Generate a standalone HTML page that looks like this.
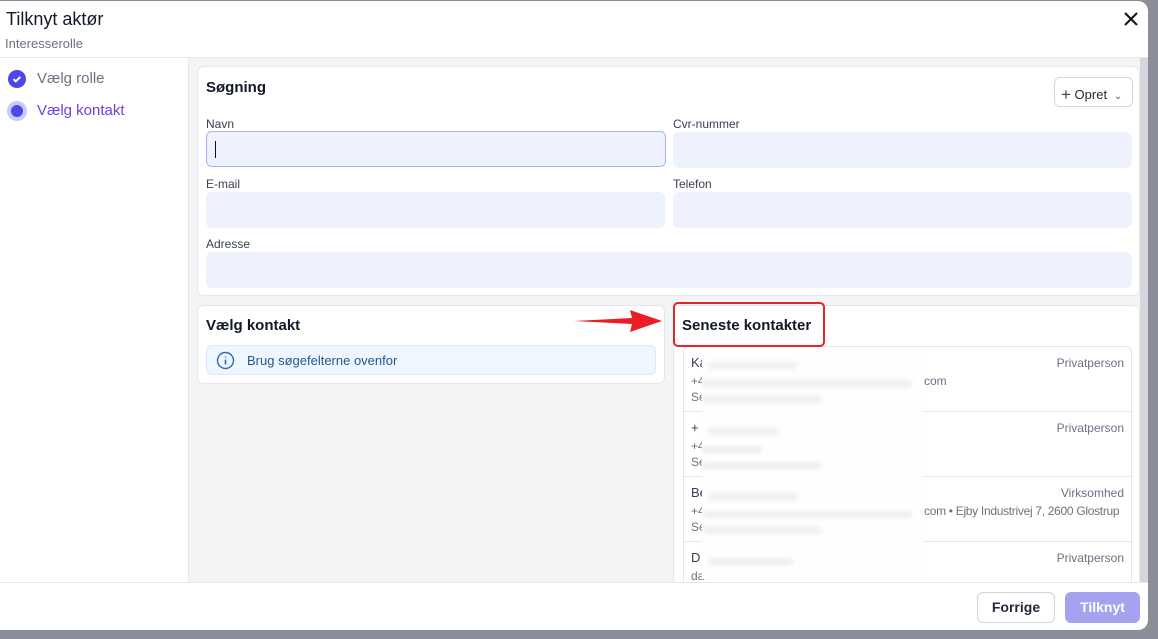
<!DOCTYPE html>
<html><head><meta charset="utf-8"><style>
*{box-sizing:border-box;margin:0;padding:0}
body{width:1158px;height:639px;background:#8b8e99;font-family:"Liberation Sans",sans-serif;position:relative;overflow:hidden}
.dlg{position:absolute;left:0;top:1px;width:1148px;height:629px;background:#fff;border-radius:0 10px 10px 0;overflow:hidden}
.abs{position:absolute}
.hdr{left:0;top:0;width:1148px;height:57px;border-bottom:1px solid #e5e7eb}
.side{left:0;top:57px;width:189px;height:524px;border-right:1px solid #e5e7eb}
.main{left:189px;top:57px;width:951px;height:524px;background:#f3f4f6;overflow:hidden}
.sb{left:1140px;top:57px;width:8px;height:524px;background:#d4d6dc}
.card{position:absolute;background:#fff;border:1px solid #e5e7eb;border-radius:7px}
.lbl{position:absolute;font-size:12px;color:#374151}
.inp{position:absolute;height:36px;background:#eef2fd;border-radius:6px}
.h{font-size:15px;font-weight:bold;color:#111827;position:absolute}
.row{position:absolute;left:0;width:448px;height:65px;border-bottom:1px solid #e5e7eb;font-size:12px;color:#6b7280;white-space:nowrap}
.foot{left:0;top:581px;width:1148px;height:48px;border-top:1px solid #e5e7eb}
.bl{position:absolute;height:7px;background:#eceef0;border-radius:4px;filter:blur(2px)}
</style></head><body>
<div class="dlg">
<div class="abs hdr">
 <div class="abs" style="left:6px;top:8px;font-size:18px;color:#111827">Tilknyt aktør</div>
 <div class="abs" style="left:5px;top:35px;font-size:13px;color:#6b7280">Interesserolle</div>
 <svg class="abs" style="left:1124px;top:11px" width="14" height="14" viewBox="0 0 14 14"><path d="M1 1L13 13M13 1L1 13" stroke="#111" stroke-width="2"/></svg>
</div>
<div class="abs side">
 <div class="abs" style="left:8px;top:12px;width:18px;height:18px;border-radius:50%;background:#4f46e5"><svg width="18" height="18" viewBox="0 0 18 18"><path d="M5.5 9.2l2.3 2.2 4.5-4.6" stroke="#fff" stroke-width="2" fill="none"/></svg></div>
 <div class="abs" style="left:37px;top:12px;font-size:15px;color:#6b7280">Vælg rolle</div>
 <div class="abs" style="left:7px;top:43px;width:20px;height:20px;border-radius:50%;background:#c7cbf7"><div style="margin:4px;width:12px;height:12px;border-radius:50%;background:#4f46e5"></div></div>
 <div class="abs" style="left:37px;top:44px;font-size:15px;color:#6d3ee0">Vælg kontakt</div>
</div>
<div class="abs main">
 <div class="card" style="left:8px;top:8px;width:943px;height:230px">
  <div class="h" style="left:8px;top:12px">Søgning</div>
  <div class="abs" style="left:856px;top:10px;width:79px;height:30px;border:1px solid #d1d5db;border-radius:6px;font-size:13px;color:#1f2937;padding:6px 0 0 6px;white-space:nowrap"><span style="font-size:17px;position:relative;top:1px;color:#444">+</span> Opret <span style="font-size:10px;color:#555;margin-left:3px">&#8964;</span></div>
  <div class="lbl" style="left:8px;top:50px">Navn</div>
  <div class="inp" style="left:8px;top:64px;width:460px;border:1px solid #a5b4fc"><div style="position:absolute;left:8px;top:9px;width:1px;height:17px;background:#111"></div></div>
  <div class="lbl" style="left:475px;top:50px">Cvr-nummer</div>
  <div class="inp" style="left:475px;top:65px;width:459px"></div>
  <div class="lbl" style="left:8px;top:110px">E-mail</div>
  <div class="inp" style="left:8px;top:125px;width:459px"></div>
  <div class="lbl" style="left:475px;top:110px">Telefon</div>
  <div class="inp" style="left:475px;top:125px;width:459px"></div>
  <div class="lbl" style="left:8px;top:170px">Adresse</div>
  <div class="inp" style="left:8px;top:185px;width:926px"></div>
 </div>
 <div class="card" style="left:8px;top:247px;width:468px;height:79px">
  <div class="h" style="left:8px;top:11px">Vælg kontakt</div>
  <div class="abs" style="left:8px;top:39px;width:450px;height:30px;background:#eff6ff;border:1px solid #dbeafe;border-radius:6px">
   <svg class="abs" style="left:9px;top:5px" width="19" height="19" viewBox="0 0 19 19"><circle cx="9.5" cy="9.5" r="8" stroke="#2b6cb0" stroke-width="1.4" fill="none"/><path d="M9.5 8.5v5M9.5 5.5v1" stroke="#2b6cb0" stroke-width="1.6"/></svg>
   <div class="abs" style="left:40px;top:7px;font-size:13px;color:#1e5a8f">Brug søgefelterne ovenfor</div>
  </div>
 </div>
 <div class="card" style="left:484px;top:247px;width:467px;height:300px">
  <div class="h" style="left:8px;top:11px">Seneste kontakter</div>
  <div class="abs" style="left:9px;top:40px;width:449px;height:260px;border:1px solid #e5e7eb;border-radius:6px 6px 0 0;overflow:hidden">
   <div class="row" style="top:0"><div class="abs" style="left:7px;top:8px;font-size:13px;color:#374151">Ka</div><div class="abs" style="right:8px;top:9px">Privatperson</div><div class="abs" style="left:7px;top:27px">+4</div><div class="abs" style="left:240px;top:27px">com</div><div class="abs" style="left:7px;top:43px">Se</div></div>
   <div class="row" style="top:65px"><div class="abs" style="left:7px;top:8px;font-size:13px;color:#374151">+</div><div class="abs" style="right:8px;top:9px">Privatperson</div><div class="abs" style="left:7px;top:27px">+4</div><div class="abs" style="left:7px;top:43px">Se</div></div>
   <div class="row" style="top:130px"><div class="abs" style="left:7px;top:8px;font-size:13px;color:#374151">Be</div><div class="abs" style="right:8px;top:9px">Virksomhed</div><div class="abs" style="left:7px;top:27px">+4</div><div class="abs" style="left:240px;top:27px;letter-spacing:-0.3px">com • Ejby Industrivej 7, 2600 Glostrup</div><div class="abs" style="left:7px;top:43px">Se</div></div>
   <div class="row" style="top:195px"><div class="abs" style="left:7px;top:8px;font-size:13px;color:#374151">D</div><div class="abs" style="right:8px;top:9px">Privatperson</div><div class="abs" style="left:7px;top:27px">da</div></div>
   <div class="abs" style="left:18px;top:10px;width:221px;height:222px;background:#fefefe">
    <div class="bl" style="left:6px;top:5px;width:90px"></div><div class="bl" style="left:0;top:23px;width:210px"></div><div class="bl" style="left:0;top:39px;width:120px"></div>
    <div class="bl" style="left:6px;top:71px;width:70px"></div><div class="bl" style="left:0;top:89px;width:60px"></div><div class="bl" style="left:0;top:105px;width:120px"></div>
    <div class="bl" style="left:6px;top:136px;width:90px"></div><div class="bl" style="left:0;top:154px;width:210px"></div><div class="bl" style="left:0;top:170px;width:120px"></div>
    <div class="bl" style="left:6px;top:201px;width:85px"></div>
   </div>
  </div>
 </div>
 <div class="abs" style="left:484px;top:244px;width:152px;height:45px;border:2px solid #e3262c;border-radius:5px"></div>
 <svg class="abs" style="left:385px;top:250px" width="90" height="28" viewBox="0 0 90 28"><path d="M0 13L58 10L56 2L88 13L56 24L58 16Z" fill="#ee1c24"/></svg>
</div>
<div class="abs sb"></div>
<div class="abs foot">
 <div class="abs" style="left:977px;top:9px;width:78px;height:31px;border:1px solid #d1d5db;border-radius:6px;font-size:14px;font-weight:bold;color:#1f2937;text-align:center;line-height:29px">Forrige</div>
 <div class="abs" style="left:1065px;top:9px;width:75px;height:31px;background:#a5a3ef;border-radius:6px;font-size:14px;font-weight:bold;color:#fff;text-align:center;line-height:31px">Tilknyt</div>
</div>
</div>
</body></html>
